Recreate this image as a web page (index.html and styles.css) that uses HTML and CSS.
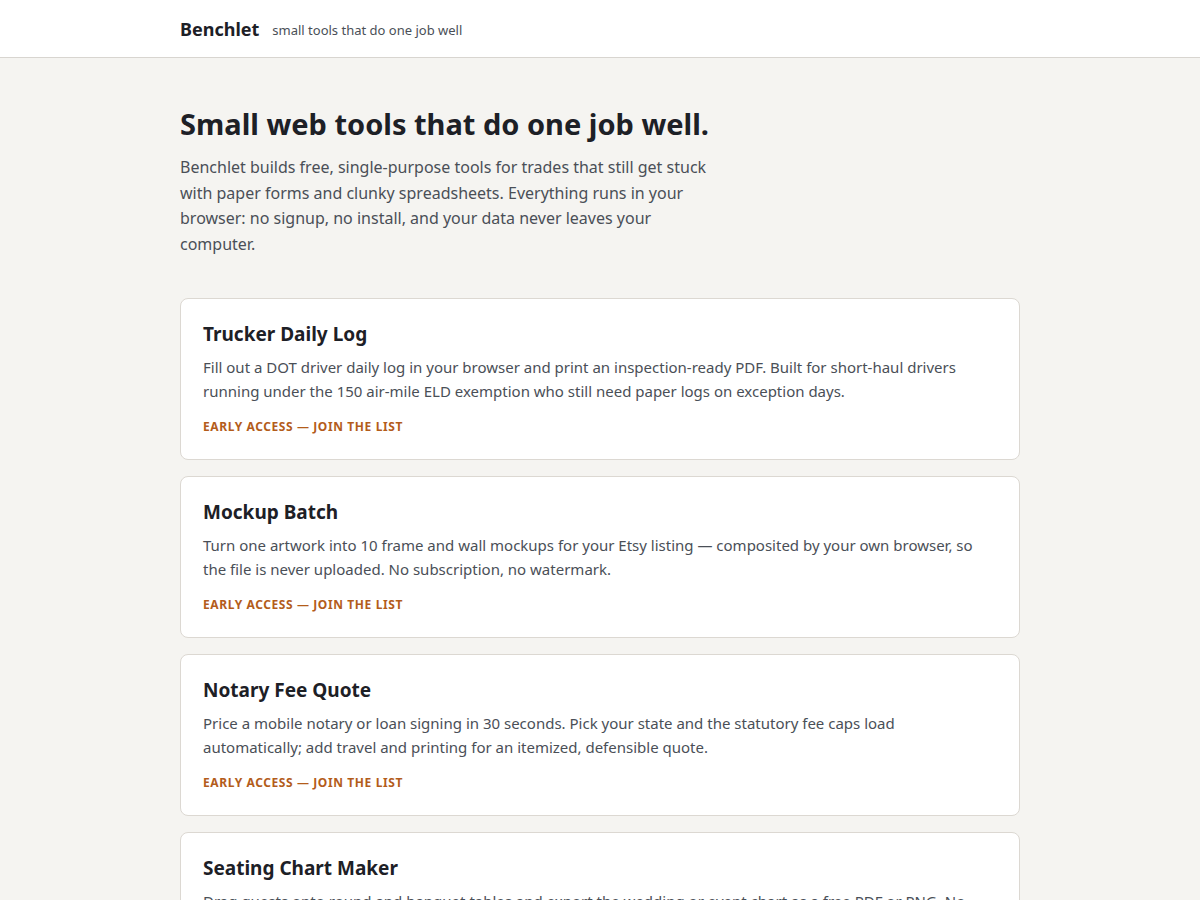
FILE: index.html
```html
<!DOCTYPE html>
<html lang="en">
<head>
    <meta charset="UTF-8">
    <meta name="viewport" content="width=device-width, initial-scale=1.0">
    <title>Benchlet</title>
    <link rel="stylesheet" href="styles.css">
</head>
<body>

    <header class="site-header">
        <div class="wrap header-inner">
            <span class="brand">Benchlet</span>
            <span class="tagline">small tools that do one job well</span>
        </div>
    </header>

    <main class="wrap">
        <section class="hero">
            <h1>Small web tools that do one job well.</h1>
            <p>Benchlet builds free, single-purpose tools for trades that still get stuck with paper forms and clunky spreadsheets. Everything runs in your browser: no signup, no install, and your data never leaves your computer.</p>
        </section>

        <div class="tools">
            <div class="tool">
                <h2>Trucker Daily Log</h2>
                <p>Fill out a DOT driver daily log in your browser and print an inspection-ready PDF. Built for short-haul drivers running under the 150 air-mile ELD exemption who still need paper logs on exception days.</p>
                <a class="tool-link" href="#">Early access — join the list</a>
            </div>

            <div class="tool">
                <h2>Mockup Batch</h2>
                <p>Turn one artwork into 10 frame and wall mockups for your Etsy listing — composited by your own browser, so the file is never uploaded. No subscription, no watermark.</p>
                <a class="tool-link" href="#">Early access — join the list</a>
            </div>

            <div class="tool">
                <h2>Notary Fee Quote</h2>
                <p>Price a mobile notary or loan signing in 30 seconds. Pick your state and the statutory fee caps load automatically; add travel and printing for an itemized, defensible quote.</p>
                <a class="tool-link" href="#">Early access — join the list</a>
            </div>

            <div class="tool">
                <h2>Seating Chart Maker</h2>
                <p>Drag guests onto round and banquet tables and export the wedding or event chart as a free PDF or PNG. No account, no guest list stored anywhere but your own computer.</p>
                <a class="tool-link" href="#">Early access — join the list</a>
            </div>
        </div>
    </main>

</body>
</html>
```

FILE: styles.css
```css
body {
    font-family: "Noto Sans", "Open Sans", sans-serif;
    background-color: #f5f4f1;
    color: #1d2026;
    margin: 0;
}

.wrap {
    max-width: 840px;
    margin: 0 auto;
}

.site-header {
    background: #fff;
    border-bottom: 1px solid #d8d5d0;
}

.header-inner {
    display: flex;
    align-items: center;
    gap: 13px;
    height: 57px;
}

.brand {
    font-size: 18px;
    font-weight: 700;
    color: #1d2026;
}

.tagline {
    font-size: 13px;
    color: #4a4f57;
    margin-top: 3px;
}

.hero {
    padding-top: 48px;
    margin-bottom: 40px;
}

.hero h1 {
    font-size: 29px;
    line-height: 36px;
    margin: 0 0 13px;
}

.hero p {
    max-width: 540px;
    font-size: 16px;
    line-height: 25.7px;
    color: #4a4f57;
    margin: 0;
}

.tools {
    display: flex;
    flex-direction: column;
    gap: 16px;
    padding-bottom: 40px;
}

.tool {
    background: #fff;
    border: 1px solid #dcd8d2;
    border-radius: 8px;
    padding: 22px;
}

.tool h2 {
    font-size: 19px;
    line-height: 26px;
    margin: 0 0 8px;
}

.tool p {
    font-size: 15px;
    line-height: 24px;
    color: #4a4f57;
    margin: 0 0 14px;
}

.tool-link {
    display: block;
    font-size: 12px;
    line-height: 20px;
    font-weight: 700;
    letter-spacing: 0.6px;
    text-transform: uppercase;
    text-decoration: none;
    color: #b35c1b;
}
```
